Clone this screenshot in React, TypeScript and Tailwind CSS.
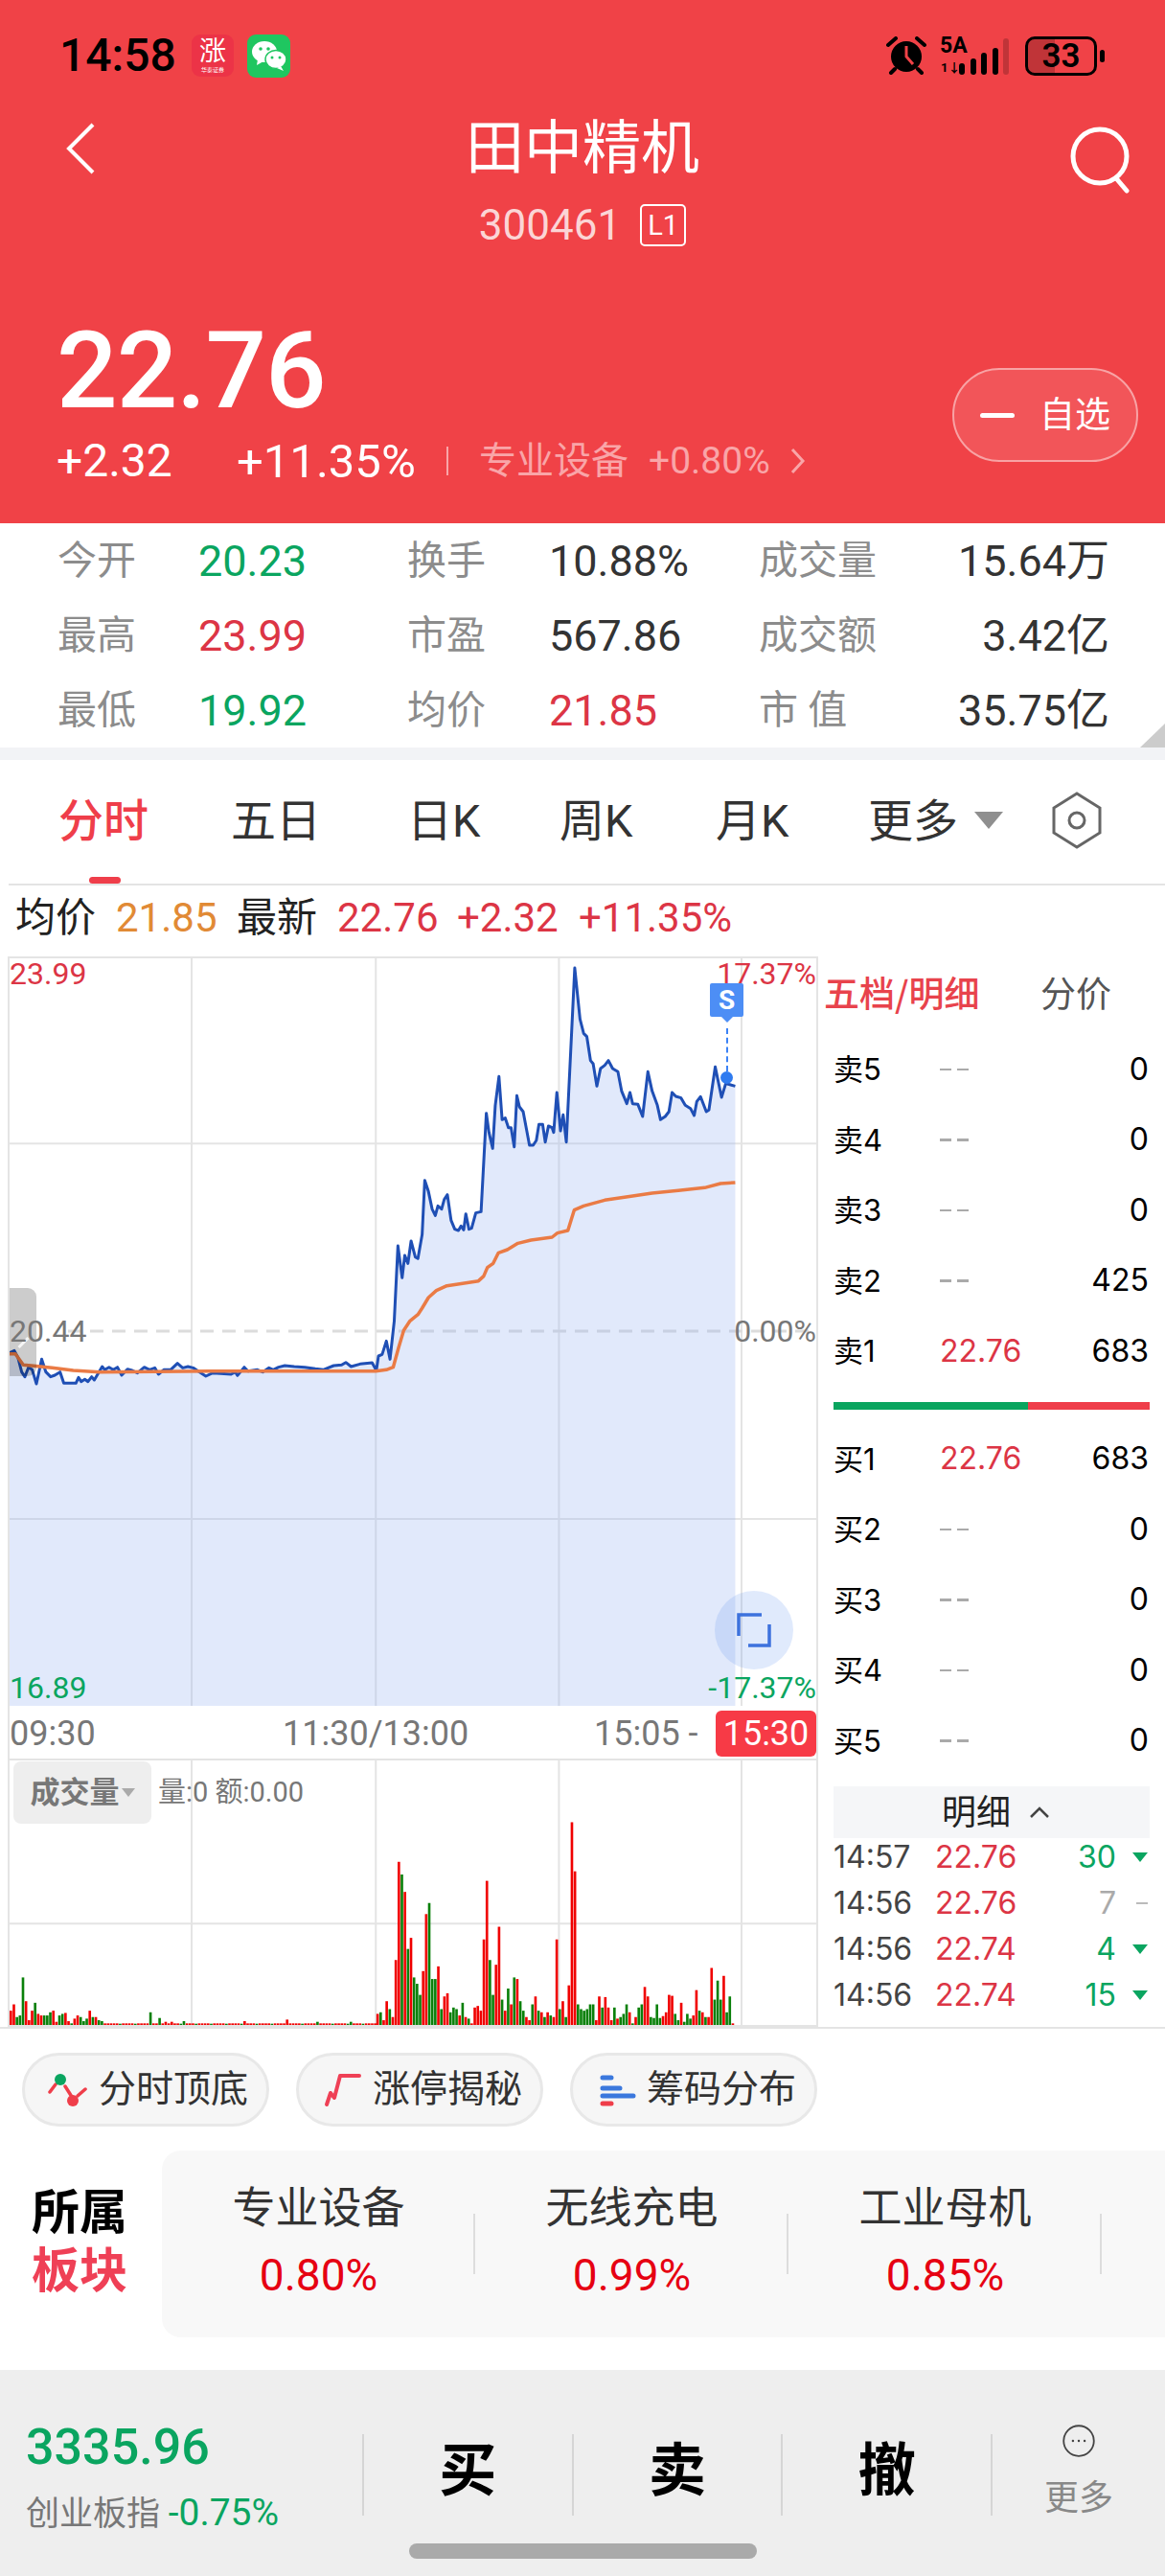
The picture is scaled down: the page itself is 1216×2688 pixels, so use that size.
import { ReactNode } from 'react';

const UP = 'text-[#dc3545]';
const DOWN = 'text-[#0aa560]';

// intraday price curve, in chart units (viewBox below)
const pricePts = [
  [19, 1265], [28, 1258], [35, 1280], [42, 1325], [48, 1340], [55, 1310], [62, 1318], [70, 1362], [80, 1285], [88, 1325], [97, 1340], [105, 1335], [115, 1325], [122, 1360], [145, 1360], [150, 1342], [155, 1355], [162, 1348], [168, 1355], [175, 1340], [180, 1350], [195, 1308], [200, 1318], [208, 1310], [216, 1318], [224, 1310], [232, 1335], [243, 1316], [252, 1320], [262, 1328], [275, 1310], [285, 1318], [295, 1312], [302, 1332], [312, 1318], [325, 1318], [338, 1298], [348, 1312], [358, 1308], [368, 1312], [380, 1325], [392, 1338], [405, 1328], [420, 1330], [440, 1332], [448, 1325], [452, 1336], [465, 1310], [472, 1322], [490, 1318], [500, 1325], [512, 1312], [520, 1318], [530, 1310], [542, 1305], [560, 1308], [580, 1310], [600, 1315], [615, 1318], [635, 1305], [650, 1303], [658, 1295], [668, 1308], [685, 1300], [708, 1296], [716, 1320],
  [720, 1275], [727, 1270], [735, 1228], [742, 1285], [750, 1165], [757, 930], [765, 1030], [770, 960], [776, 985], [782, 915], [790, 965], [795, 970], [803, 895], [808, 725], [815, 760], [822, 815], [828, 835], [833, 805], [840, 815], [845, 785], [851, 770], [858, 850], [865, 878], [872, 882], [877, 868], [882, 880], [886, 830], [892, 878], [897, 875], [905, 827], [915, 823], [925, 515], [930, 575], [937, 625], [942, 490], [949, 400], [955, 535], [961, 530], [967, 560], [972, 560], [978, 620], [983, 460], [988, 495], [995, 510], [1007, 615], [1014, 615], [1020, 600], [1025, 550], [1032, 550], [1037, 605], [1043, 555], [1050, 560], [1053, 575], [1059, 450], [1066, 570], [1071, 520], [1077, 605], [1093, 60], [1103, 220], [1110, 265], [1116, 275], [1123, 350], [1128, 360], [1135, 430], [1142, 375], [1150, 365], [1157, 350], [1165, 375], [1175, 385], [1182, 445], [1192, 485], [1198, 450], [1203, 485], [1213, 487], [1222, 525], [1232, 385], [1240, 445], [1250, 490], [1256, 535], [1265, 525], [1272, 510], [1278, 450], [1285, 462], [1295, 467], [1303, 490], [1313, 500], [1320, 522], [1325, 478], [1332, 463], [1343, 510], [1348, 505], [1360, 370], [1372, 465], [1380, 422], [1398, 430],
];

const avgPts = [
  [19, 1268], [30, 1268], [45, 1303], [60, 1305], [100, 1312], [140, 1320], [190, 1325], [400, 1322], [715, 1322], [735, 1318], [748, 1310], [758, 1250], [768, 1195], [780, 1165], [795, 1145], [803, 1125], [815, 1092], [830, 1070], [850, 1055], [880, 1048], [910, 1040], [920, 1025], [927, 998], [938, 985], [948, 952], [965, 942], [985, 922], [1010, 912], [1050, 903], [1060, 890], [1080, 882], [1092, 818], [1110, 805], [1150, 787], [1200, 775], [1240, 765], [1290, 757], [1340, 748], [1370, 735], [1398, 732],
];

// volume bars: positive = up tick (red), negative = down tick (green)
const openBars = [45, 65, -25, -30, -150, 75, 15, 45, -70, 35, 30, -30, -30, -40, 45, 10, -30, -35, 38, 12, -5, 20, 30, -25, -12, -20, 45, -25, 25, -15, -12, 5];
const quietBars: Record<number, number> = { 46: -40, 49: -22, 51: 10, 53: 10, 57: -12, 77: 12, 91: 17, 101: -10, 112: -10 };
const pmBars = [35, -40, 15, 75, -50, 25, 205, 515, -475, 420, -240, 275, -150, -130, -95, 170, 350, -385, -145, -145, 185, -50, 90, 100, -40, -55, -50, 30, -70, 25, -20, 5, 55, 60, 45, 270, 455, -205, -95, 190, 310, -80, 45, -115, 65, -150, 145, -75, -45, 25, 15, -65, 90, -45, 40, -25, 40, -30, 25, 270, -50, 75, -25, 125, 640, 485, -65, -50, -45, -50, -65, -65, 15, 90, -55, 88, 55, 15, -55, 20, -25, -35, -65, 40, -5, 25, -55, -65, 120, 90, -25, -22, -65, -22, 28, 40, 95, 92, -35, -15, 70, -10, -35, -20, 30, 110, -45, 40, -25, 25, 180, -80, -140, -80, 155, -40, -90, 5];

const morning = Array.from({ length: 121 }, (_, i) => openBars[i] ?? quietBars[i] ?? (i % 5 === 1 ? -4 : 5));

const toPoints = (pts: number[][]) => pts.map((p) => p.join(',')).join(' ');

const stats = [
  ['今开', '20.23', DOWN, '换手', '10.88%', 'text-[#333]', '成交量', '15.64万'],
  ['最高', '23.99', UP, '市盈', '567.86', 'text-[#333]', '成交额', '3.42亿'],
  ['最低', '19.92', DOWN, '均价', '21.85', UP, '市 值', '35.75亿'],
];

const sectors = [
  ['专业设备', '0.80%'],
  ['无线充电', '0.99%'],
  ['工业母机', '0.85%'],
];

function StatusBar() {
  return (
    <div className="flex h-[116px] items-center pl-[62px] pr-[63px] text-black">
      <span className="w-[138px] text-[48px] font-medium leading-none">14:58</span>
      <div className="flex h-[44px] w-[44px] flex-col items-center justify-center rounded-[9px] bg-[#ec3347] text-white">
        <span className="text-[28px] leading-[30px]">涨</span>
        <span className="text-[6px] leading-[8px]">华泰证券</span>
      </div>
      <div className="ml-[14px] flex h-[45px] w-[45px] items-center justify-center rounded-[9px] bg-[#1fc660]">
        <svg width="38" height="34" viewBox="0 0 38 34" fill="#fff">
          <ellipse cx="14" cy="13" rx="13" ry="11" />
          <path d="M7 21l-1 6 7-4z" />
          <ellipse cx="26" cy="21" rx="11" ry="9.5" stroke="#1fc660" strokeWidth="1.5" />
          <path d="M31 28l3 5-7-3z" />
          <circle cx="10" cy="10" r="1.8" fill="#1fc660" />
          <circle cx="18" cy="10" r="1.8" fill="#1fc660" />
          <circle cx="22" cy="19" r="1.5" fill="#1fc660" />
          <circle cx="30" cy="19" r="1.5" fill="#1fc660" />
        </svg>
      </div>
      <div className="flex-1" />
      <svg width="42" height="40" viewBox="0 0 42 40" className="mr-[14px]">
        <circle cx="21" cy="21" r="16" fill="#000" />
        <path d="M21 10v11l7 8" fill="none" stroke="#f04247" strokeWidth="3" />
        <path d="M2 9l8-7M40 9l-8-7M9 34l-4 4M33 34l4 4" stroke="#000" strokeWidth="4" strokeLinecap="round" />
      </svg>
      <div className="relative mr-[17px] h-[40px] w-[72px]">
        <span className="absolute left-0 top-[-1px] text-[23px] font-bold leading-[22px]">5A</span>
        <span className="absolute bottom-0 left-[1px] text-[13px] font-bold leading-[14px]">1↓</span>
        <div className="absolute bottom-0 right-0 flex items-end gap-[5.5px]">
          {[12, 17, 23, 28, 38].map((h, i) => (
            <div
              key={h}
              style={{ height: h }}
              className={i === 4 ? 'w-[6px] rounded-full bg-black/20' : 'w-[6px] rounded-full bg-black'}
            />
          ))}
        </div>
      </div>
      <div className="relative flex h-[41px] w-[75px] items-center justify-center overflow-hidden rounded-[10px] border-[3px] border-black">
        <div className="absolute inset-y-0 left-0 w-[28px] bg-black/20" />
        <span className="relative text-[35px] font-semibold leading-none">33</span>
      </div>
      <div className="ml-[3px] h-[13px] w-[5px] rounded-full bg-black" />
    </div>
  );
}

function Header() {
  return (
    <header className="h-[546px] bg-[#f04247] text-white">
      <StatusBar />
      <div className="flex h-[78px] items-center justify-between pl-[68px] pr-[34px]">
        <svg width="32" height="54" viewBox="0 0 32 54" fill="none" stroke="#fff" strokeWidth="4">
          <path d="M29 2L4 27l25 25" />
        </svg>
        <h1 className="text-[61px] leading-none">田中精机</h1>
        <svg width="66" height="70" viewBox="0 0 66 70" fill="none" stroke="#fff" strokeWidth="5" className="mt-[24px]">
          <circle cx="32" cy="31" r="28" />
          <path d="M49 54l11 13" strokeLinecap="round" />
        </svg>
      </div>
      <div className="flex h-[82px] items-center justify-center gap-[20px]">
        <span className="text-[44px] leading-none text-[#fbd5d6]">300461</span>
        <span className="flex h-[44px] w-[48px] items-center justify-center rounded-[5px] border-2 border-white text-[29px] leading-none text-[#fff]">L1</span>
      </div>
      <div className="mt-[54px] flex justify-between pl-[59px] pr-[28px]">
        <div>
          <div className="flex h-[114px] items-center text-[112px] font-medium leading-none tracking-[-1px]">22.76</div>
          <div className="flex h-[74px] items-center">
            <span className="w-[188px] text-[48px] leading-none">+2.32</span>
            <span className="w-[219px] text-[49px] leading-none">+11.35%</span>
            <span className="mr-[32px] h-[30px] w-[2px] bg-[#f9a5a8]" />
            <span className="w-[177px] text-[39px] leading-none text-[#f9a5a8]">专业设备</span>
            <span className="w-[148px] text-[39px] leading-none text-[#f9a5a8]">+0.80%</span>
            <svg width="16" height="28" viewBox="0 0 16 28" fill="none" stroke="#f9a5a8" strokeWidth="3">
              <path d="M2 2l11 12L2 26" />
            </svg>
          </div>
        </div>
        <button className="mt-[54px] flex h-[98px] w-[194px] items-center justify-center gap-[26px] rounded-full border-2 border-[#f8a3a5] bg-white/10">
          <span className="h-[5px] w-[36px] rounded-full bg-white" />
          <span className="text-[37px] leading-none">自选</span>
        </button>
      </div>
    </header>
  );
}

function StatsTable() {
  return (
    <section className="relative h-[234px] bg-white">
      {stats.map((r) => (
        <div key={r[0]} className="flex h-[78px] items-center pl-[60px] pr-[58px] text-[41px] leading-none">
          <span className="w-[147px] text-[#8c8c8c]">{r[0]}</span>
          <span className={`w-[218px] text-[45px] ${r[2]}`}>{r[1]}</span>
          <span className="w-[148px] text-[#8c8c8c]">{r[3]}</span>
          <span className={`w-[219px] text-[45px] ${r[5]}`}>{r[4]}</span>
          <span className="text-[#8c8c8c]">{r[6]}</span>
          <span className="flex-1 text-right text-[45px] text-[#333]">{r[7]}</span>
        </div>
      ))}
      <div className="absolute bottom-0 right-0 h-[25px] w-[26px] bg-[#cccccc] [clip-path:polygon(100%_0,100%_100%,0_100%)]" />
    </section>
  );
}

function Tabs() {
  return (
    <nav className="relative flex h-[129px] items-center pb-[3px] text-[#333]">
      <span className="ml-[61px] w-[180px] text-[47px] font-medium leading-none text-[#ef3e4a]">分时</span>
      <span className="w-[184px] text-[47px] leading-none">五日</span>
      <span className="w-[159px] text-[47px] leading-none">日K</span>
      <span className="w-[163px] text-[47px] leading-none">周K</span>
      <span className="w-[159px] text-[47px] leading-none">月K</span>
      <span className="w-[111px] text-[47px] leading-none">更多</span>
      <svg width="30" height="18" viewBox="0 0 30 18" fill="#8f8f8f">
        <path d="M0 0h30L15 18z" />
      </svg>
      <svg width="54" height="60" viewBox="0 0 54 60" fill="none" stroke="#666" strokeWidth="3" className="ml-[50px]">
        <path d="M27 2l24 15v26L27 58 3 43V17z" />
        <circle cx="27" cy="30" r="8" />
      </svg>
      <div className="absolute bottom-0 left-[93px] h-[7px] w-[33px] rounded-full bg-[#ef3e4a]" />
    </nav>
  );
}

function QuoteLine() {
  return (
    <div className="ml-[9px] flex h-[76px] items-center border-t-2 border-[#e4e4e4] pb-[7px] pl-[7px] text-[42px] leading-none">
      <span className="w-[105px] text-[#222]">均价</span>
      <span className="w-[126px] text-[#e18a35]">21.85</span>
      <span className="w-[105px] text-[#222]">最新</span>
      <span className={`w-[125px] ${UP}`}>22.76</span>
      <span className={`w-[127px] ${UP}`}>+2.32</span>
      <span className={UP}>+11.35%</span>
    </div>
  );
}

function PriceChart() {
  const last = pricePts[pricePts.length - 1];
  const area = `${toPoints(pricePts)} ${last[0]},2370 19,2370`;
  return (
    <div className="relative h-[782px] border-x-2 border-t-2 border-[#e4e4e4] text-[32px] leading-none">
      <svg className="absolute inset-0 h-full w-full" viewBox="19 30 1533 2340" preserveAspectRatio="none">
        {[365, 715, 1063, 1410].map((x) => (
          <line key={x} x1={x} x2={x} y1="30" y2="2370" stroke="#e4e4e4" strokeWidth="2" vectorEffect="non-scaling-stroke" />
        ))}
        {[610, 1785].map((y) => (
          <line key={y} x1="19" x2="1552" y1={y} y2={y} stroke="#e4e4e4" strokeWidth="2" vectorEffect="non-scaling-stroke" />
        ))}
        <line x1="130" x2="1552" y1="1197" y2="1197" stroke="#dcdcdc" strokeWidth="3" strokeDasharray="14 9" vectorEffect="non-scaling-stroke" />
        <polygon points={area} fill="rgba(155,182,242,0.3)" />
        <polyline points={toPoints(pricePts)} fill="none" stroke="#1f4fb5" strokeWidth="3" strokeLinejoin="round" vectorEffect="non-scaling-stroke" />
        <polyline points={toPoints(avgPts)} fill="none" stroke="#ea7b45" strokeWidth="3.5" strokeLinejoin="round" vectorEffect="non-scaling-stroke" />
      </svg>

      {/* drag handle on the left edge */}
      <div className="absolute left-0 top-[344px] flex h-[92px] w-[28px] items-end justify-center rounded-r-[9px] bg-black/20 pb-[28px]">
        <i className="h-[14px] w-[3px] rotate-45 bg-white/80" />
      </div>
      <span className={`absolute left-0 top-0 ${UP}`}>23.99</span>
      <span className={`absolute right-0 top-0 ${UP}`}>17.37%</span>
      <span className="absolute left-0 top-[373px] text-[#777]">20.44</span>
      <span className="absolute right-0 top-[373px] text-[#777]">0.00%</span>
      <span className={`absolute bottom-[3px] left-0 ${DOWN}`}>16.89</span>
      <span className={`absolute bottom-[3px] right-0 ${DOWN}`}>-17.37%</span>

      {/* latest-signal marker */}
      <div className="absolute left-[731px] top-[26px] flex w-[35px] flex-col items-center">
        <div className="flex h-[35px] w-[35px] items-center justify-center rounded-[2px] bg-[#4d8ef5] text-[28px] font-bold text-white">S</div>
        <div className="h-0 w-0 border-x-[6px] border-t-[6px] border-x-transparent border-t-[#4d8ef5]" />
        <div className="mt-[6px] h-[45px] border-l-2 border-dashed border-[#3b82f6]" />
        <div className="h-[13px] w-[13px] rounded-full bg-[#2f7bf0]" />
      </div>

      <div className="absolute bottom-[38px] left-[736px] flex h-[82px] w-[82px] items-center justify-center rounded-full bg-[#6496f0]/20">
        <svg width="36" height="36" viewBox="0 0 36 36" fill="none" stroke="#3d72dd" strokeWidth="3.5">
          <path d="M2 24V2h24M34 12v22H12" />
        </svg>
      </div>
    </div>
  );
}

function TimeAxis() {
  return (
    <div className="flex h-[57px] items-center border-x-2 border-b-2 border-[#e4e4e4] pt-[2px] text-[36px] leading-none text-[#777]">
      <span className="w-[285px]">09:30</span>
      <span className="w-[325px]">11:30/13:00</span>
      <span className="w-[127px]">15:05 -</span>
      <span className="flex h-[48px] flex-1 items-center justify-center rounded-[6px] bg-[#f73a46] text-white">15:30</span>
    </div>
  );
}

function VolumeChart() {
  return (
    <div className="relative h-[278px] border-x-2 border-b-2 border-[#e4e4e4]">
      <svg className="absolute inset-0 h-full w-full" viewBox="19 170 1533 835" preserveAspectRatio="none">
        {[365, 715, 1063, 1410].map((x) => (
          <line key={x} x1={x} x2={x} y1="170" y2="1005" stroke="#e4e4e4" strokeWidth="2" vectorEffect="non-scaling-stroke" />
        ))}
        <line x1="19" x2="1552" y1="685" y2="685" stroke="#e4e4e4" strokeWidth="2" vectorEffect="non-scaling-stroke" />
        {morning.map((v, i) => (
          <rect key={i} x={19 + i * 5.77} y={1005 - Math.abs(v)} width="4.8" height={Math.abs(v)} fill={v > 0 ? '#f00000' : '#0a800a'} />
        ))}
        {pmBars.map((v, i) => (
          <rect key={i} x={716 + i * 5.77} y={1005 - Math.abs(v)} width="4.8" height={Math.abs(v)} fill={v > 0 ? '#f00000' : '#0a800a'} />
        ))}
      </svg>
      <div className="relative flex h-[66px] items-center">
        <div className="ml-[4px] flex h-[65px] w-[144px] items-center justify-center gap-[2px] rounded-[8px] bg-[#eeeeee] text-[31px] font-bold leading-none text-[#777]">
          成交量
          <svg width="14" height="9" viewBox="0 0 14 9" fill="#aaa">
            <path d="M0 0h14L7 9z" />
          </svg>
        </div>
        <span className="ml-[7px] text-[29px] leading-none text-[#777]">量:0 额:0.00</span>
      </div>
    </div>
  );
}

function BookRow({ label, price, size }: { label: string; price?: string; size: string }) {
  return (
    <div className="flex h-[73.5px] items-center pl-[16px] pr-[17px] text-[32px] leading-none text-black">
      <span className="w-[111px] text-[31px]">{label}</span>
      {price ? (
        <span className={`flex-1 ${UP}`}>{price}</span>
      ) : (
        <span className="flex flex-1 gap-[6px]">
          <i className="h-[2.5px] w-[12px] bg-[#aaa]" />
          <i className="h-[2.5px] w-[12px] bg-[#aaa]" />
        </span>
      )}
      <span>{size}</span>
    </div>
  );
}

function TradeRow({ time, price, size, dir }: { time: string; price: string; size: string; dir: 'down' | 'flat' }) {
  return (
    <div className="flex h-[48px] items-center pl-[16px] pr-[18px] text-[32px] leading-none">
      <span className="w-[106px] text-[#444]">{time}</span>
      <span className={`w-[100px] ${UP}`}>{price}</span>
      <span className={`flex-1 text-right ${dir === 'down' ? DOWN : 'text-[#aaa]'}`}>{size}</span>
      <span className="flex w-[33px] justify-end">
        {dir === 'down' ? (
          <svg width="16" height="10" viewBox="0 0 16 10" fill="#0aa560">
            <path d="M0 0h16L8 10z" />
          </svg>
        ) : (
          <i className="h-[2px] w-[12px] bg-[#bbb]" />
        )}
      </span>
    </div>
  );
}

function OrderBook() {
  return (
    <aside className="flex-1 font-['Inter','Noto_Sans_CJK_SC',sans-serif]">
      <div className="flex h-[81px] items-center pb-[7px] pl-[6px] text-[37px] leading-none">
        <span className="w-[226px] font-['Noto_Sans_CJK_SC',sans-serif] font-medium text-[#e8434c]">五档/明细</span>
        <span className="font-['Noto_Sans_CJK_SC',sans-serif] text-[#555]">分价</span>
      </div>
      <BookRow label="卖5" size="0" />
      <BookRow label="卖4" size="0" />
      <BookRow label="卖3" size="0" />
      <BookRow label="卖2" size="425" />
      <BookRow label="卖1" price="22.76" size="683" />
      <div className="ml-[16px] mr-[16px] mt-[16px] flex h-[8px]">
        <div className="w-[203px] bg-[#0aa55f]" />
        <div className="flex-1 bg-[#ef3e4a]" />
      </div>
      <div className="mt-[15px]">
        <BookRow label="买1" price="22.76" size="683" />
        <BookRow label="买2" size="0" />
        <BookRow label="买3" size="0" />
        <BookRow label="买4" size="0" />
        <BookRow label="买5" size="0" />
      </div>
      <div className="ml-[16px] mr-[16px] mt-[11px] flex h-[54px] items-center justify-center gap-[20px] bg-[#f5f6f8] pl-[8px] text-[36px] leading-none text-[#222]">
        明细
        <svg width="20" height="12" viewBox="0 0 20 12" fill="none" stroke="#444" strokeWidth="2.5">
          <path d="M1 11l9-9 9 9" />
        </svg>
      </div>
      <div className="-mt-[4px]">
        <TradeRow time="14:57" price="22.76" size="30" dir="down" />
        <TradeRow time="14:56" price="22.76" size="7" dir="flat" />
        <TradeRow time="14:56" price="22.74" size="4" dir="down" />
        <TradeRow time="14:56" price="22.74" size="15" dir="down" />
      </div>
    </aside>
  );
}

function Pill({ icon, label }: { icon: ReactNode; label: string }) {
  return (
    <div className="flex h-[77px] w-[258px] items-center rounded-full border-[3px] border-[#e8e8e8] bg-[#f6f6f6] text-[39px] leading-none text-[#333]">
      <span className="flex w-[77px] justify-end pr-[11px]">{icon}</span>
      {label}
    </div>
  );
}

function ToolPills() {
  return (
    <div className="flex gap-[28px] pl-[23px] pt-[25px]">
      <Pill
        label="分时顶底"
        icon={
          <svg width="42" height="36" viewBox="0 0 42 36" fill="none" stroke="#ef3e4a" strokeWidth="3.5" strokeLinecap="round">
            <path d="M2 20l6-8M18 14l7 11M31 24l8-7" />
            <circle cx="13" cy="7" r="6" fill="#0aa560" stroke="none" />
            <circle cx="26" cy="29" r="6" fill="#ef3e4a" stroke="none" />
          </svg>
        }
      />
      <Pill
        label="涨停揭秘"
        icon={
          <svg width="40" height="36" viewBox="0 0 40 36" fill="none" stroke="#ef4056" strokeWidth="4" strokeLinecap="round" strokeLinejoin="round">
            <path d="M3 33l4-12 4 5 6-23h20" />
          </svg>
        }
      />
      <Pill
        label="筹码分布"
        icon={
          <svg width="38" height="34" viewBox="0 0 38 34" fill="none" strokeWidth="5" strokeLinecap="round">
            <path d="M3 4h9M3 15h18M3 23h32" stroke="#3b78dd" />
            <path d="M3 31h9" stroke="#ef3e4a" />
          </svg>
        }
      />
    </div>
  );
}

function SectorPanel() {
  return (
    <section className="mt-[25px] flex h-[195px]">
      <div className="flex w-[169px] flex-col pl-[33px] pt-[35px] text-[50px] font-bold leading-[61px]">
        <span className="text-black">所属</span>
        <span className="text-[#ef4056]">板块</span>
      </div>
      <div className="flex flex-1 rounded-l-[20px] bg-[#f8f8f8] pt-[33px]">
        {sectors.map(([name, pct]) => (
          <div key={name} className="relative h-[120px] w-[327px] text-center">
            <div className="h-[63px] text-[45px] leading-[56px] text-[#333]">{name}</div>
            <div className="text-[46px] leading-[68px] text-[#e60012]">{pct}</div>
            <div className="absolute right-0 top-[33px] h-[63px] w-[2px] bg-[#dddddd]" />
          </div>
        ))}
      </div>
    </section>
  );
}

function TradeBar() {
  const action = 'flex flex-1 items-center justify-center pb-[6px] text-[60px] font-bold leading-none text-black';
  return (
    <footer className="relative mt-[34px] h-[217px] bg-[#eeeeee]">
      <div className="flex h-[150px] items-center pt-[68px]">
        <div className="w-[378px] pl-[27px] pt-[6px]">
          <div className={`text-[52px] font-medium leading-none ${DOWN}`}>3335.96</div>
          <div className="mt-[23px] text-[35px] leading-none text-[#777]">
            创业板指 <span className={`text-[39px] ${DOWN}`}>-0.75%</span>
          </div>
        </div>
        <div className="flex h-[85px] flex-1">
          <div className={`${action} border-l-2 border-[#d5d5d5]`}>买</div>
          <div className={`${action} border-l-2 border-[#d5d5d5]`}>卖</div>
          <div className={`${action} border-l-2 border-[#d5d5d5]`}>撤</div>
          <div className="flex w-[182px] flex-col items-center border-l-2 border-[#d5d5d5]">
            <svg width="56" height="56" viewBox="0 0 56 56" fill="none" stroke="#444" strokeWidth="3" className="-mt-[10px]">
              <circle cx="28" cy="28" r="26" />
              <circle cx="18" cy="28" r="2" fill="#444" stroke="none" />
              <circle cx="28" cy="28" r="2" fill="#444" stroke="none" />
              <circle cx="38" cy="28" r="2" fill="#444" stroke="none" />
            </svg>
            <span className="mt-[25px] text-[36px] leading-none text-[#888]">更多</span>
          </div>
        </div>
      </div>
      <div className="absolute bottom-[20px] left-[427px] h-[16px] w-[363px] rounded-full bg-[#aaaaaa]" />
    </footer>
  );
}

export default function App() {
  return (
    <div className="h-[2688px] w-[1216px] overflow-hidden bg-white font-['Roboto','Noto_Sans_CJK_SC',sans-serif]">
      <Header />
      <StatsTable />
      <div className="h-[13px] bg-[#f2f3f6]" />
      <Tabs />
      <QuoteLine />
      <div className="flex h-[1117px]">
        <div className="ml-[8px] w-[846px]">
          <PriceChart />
          <TimeAxis />
          <VolumeChart />
        </div>
        <OrderBook />
      </div>
      <div className="h-[2px] bg-[#e4e4e4]" />
      <ToolPills />
      <SectorPanel />
      <TradeBar />
    </div>
  );
}
